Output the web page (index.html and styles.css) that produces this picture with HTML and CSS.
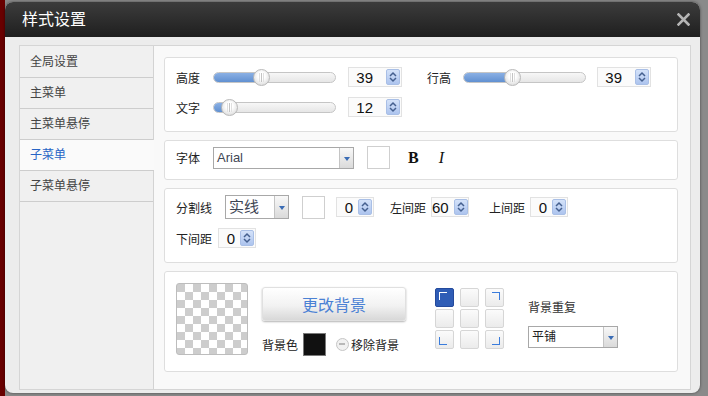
FILE: index.html
```html
<!DOCTYPE html>
<html lang="zh-CN">
<head>
    <meta charset="UTF-8">
    <title>样式设置</title>
    <link rel="stylesheet" href="styles.css">
</head>
<body>
    <div class="dialog">
        <div class="titlebar">
            <span class="title">样式设置</span>
            <svg class="close" viewBox="0 0 13 13"><path d="M1.5 1.5l10 10M11.5 1.5l-10 10" stroke="#b4b4b4" stroke-width="2.6" stroke-linecap="square"/></svg>
        </div>

        <div class="dialog-body">
            <div class="frame">
                <ul class="side-nav">
                    <li>全局设置</li>
                    <li>主菜单</li>
                    <li>主菜单悬停</li>
                    <li class="active">子菜单</li>
                    <li>子菜单悬停</li>
                </ul>

                <div class="content">
                    <!-- size -->
                    <section class="panel panel-size">
                        <div class="row">
                            <span class="label">高度</span>
                            <div class="slider"><div class="slider-fill" style="width:47px"></div><span class="slider-thumb" style="left:47px"></span></div>
                            <div class="num num-wide"><span>39</span><i class="spin"><svg viewBox="0 0 12 14"><path d="M3 6l3-3 3 3M3 8l3 3 3-3" fill="none" stroke="#45608f" stroke-width="1.5"/></svg></i></div>
                            <span class="label label-gap">行高</span>
                            <div class="slider slider-short"><div class="slider-fill" style="width:48px"></div><span class="slider-thumb" style="left:48px"></span></div>
                            <div class="num num-wide"><span>39</span><i class="spin"><svg viewBox="0 0 12 14"><path d="M3 6l3-3 3 3M3 8l3 3 3-3" fill="none" stroke="#45608f" stroke-width="1.5"/></svg></i></div>
                        </div>
                        <div class="row">
                            <span class="label">文字</span>
                            <div class="slider"><div class="slider-fill" style="width:15px"></div><span class="slider-thumb" style="left:15px"></span></div>
                            <div class="num num-wide"><span>12</span><i class="spin"><svg viewBox="0 0 12 14"><path d="M3 6l3-3 3 3M3 8l3 3 3-3" fill="none" stroke="#45608f" stroke-width="1.5"/></svg></i></div>
                        </div>
                    </section>

                    <!-- font -->
                    <section class="panel panel-font">
                        <div class="row">
                            <span class="label">字体</span>
                            <div class="select select-font"><span>Arial</span><i class="arrow"></i></div>
                            <div class="swatch"></div>
                            <span class="style-btn bold">B</span>
                            <span class="style-btn italic">I</span>
                        </div>
                    </section>

                    <!-- divider -->
                    <section class="panel panel-line">
                        <div class="row row-tall">
                            <span class="label label-line">分割线</span>
                            <div class="select select-line"><span>实线</span><i class="arrow"></i></div>
                            <div class="swatch swatch-line"></div>
                            <div class="num num-small"><span>0</span><i class="spin"><svg viewBox="0 0 12 14"><path d="M3 6l3-3 3 3M3 8l3 3 3-3" fill="none" stroke="#45608f" stroke-width="1.5"/></svg></i></div>
                            <span class="label label-gap2">左间距</span>
                            <div class="num num-small"><span>60</span><i class="spin"><svg viewBox="0 0 12 14"><path d="M3 6l3-3 3 3M3 8l3 3 3-3" fill="none" stroke="#45608f" stroke-width="1.5"/></svg></i></div>
                            <span class="label label-gap3">上间距</span>
                            <div class="num num-small"><span>0</span><i class="spin"><svg viewBox="0 0 12 14"><path d="M3 6l3-3 3 3M3 8l3 3 3-3" fill="none" stroke="#45608f" stroke-width="1.5"/></svg></i></div>
                        </div>
                        <div class="row">
                            <span class="label label-bottom">下间距</span>
                            <div class="num num-small"><span>0</span><i class="spin"><svg viewBox="0 0 12 14"><path d="M3 6l3-3 3 3M3 8l3 3 3-3" fill="none" stroke="#45608f" stroke-width="1.5"/></svg></i></div>
                        </div>
                    </section>

                    <!-- background -->
                    <section class="panel panel-bg">
                        <div class="preview"></div>
                        <div class="bg-actions">
                            <button class="change-btn">更改背景</button>
                            <div class="bg-color">
                                <span>背景色</span>
                                <div class="swatch swatch-black"></div>
                                <i class="remove-icon"></i>
                                <span class="remove-text">移除背景</span>
                            </div>
                        </div>
                        <div class="align-grid">
                            <i class="cell tl on"></i><i class="cell"></i><i class="cell tr"></i>
                            <i class="cell"></i><i class="cell"></i><i class="cell"></i>
                            <i class="cell bl"></i><i class="cell"></i><i class="cell br"></i>
                        </div>
                        <div class="repeat">
                            <div class="repeat-label">背景重复</div>
                            <div class="select select-repeat"><span>平铺</span><i class="arrow"></i></div>
                        </div>
                    </section>
                </div>
            </div>
        </div>
    </div>
</body>
</html>
```

FILE: styles.css
```css
* {
    box-sizing: border-box;
}

body {
    margin: 0;
    height: 396px;
    overflow: hidden;
    background: linear-gradient(to right, #690000 0 5px, #8a8a8a 5px);
    font-family: "Liberation Sans", "Noto Sans CJK SC", sans-serif;
    font-size: 12px;
    color: #222;
}

.dialog {
    margin: 2px 0 0 5px;
    width: 695px;
    height: 391px;
    background: #ececec;
    border-radius: 8px;
    box-shadow: 0 0 3px rgba(0, 0, 0, 0.5);
    overflow: hidden;
}

.titlebar {
    display: flex;
    align-items: center;
    justify-content: space-between;
    height: 35px;
    padding: 0 10px 4px 17px;
    background: linear-gradient(#3c3c3c, #1f1f1f);
}

.title {
    color: #fff;
    font-family: "Noto Sans CJK SC", sans-serif;
    font-size: 16px;
}

.close {
    width: 13px;
    height: 13px;
    margin-top: 4px;
}

.dialog-body {
    padding: 8px 9px 0 14px;
}

.frame {
    display: flex;
    height: 345px;
    border: 1px solid #d5d5d5;
    background: #f9f9f9;
}

.side-nav {
    list-style: none;
    margin: 0;
    padding: 1px 0 0;
    width: 134px;
    flex: none;
    background: #f0f0f0;
    border-right: 1px solid #d3d3d3;
}

.side-nav li {
    height: 31px;
    line-height: 31px;
    padding-left: 10px;
    border-bottom: 1px solid #cdcdcd;
    color: #444;
}

.side-nav li.active {
    margin-right: -1px;
    background: #fafafa;
    color: #2764c5;
}

.content {
    flex: 1;
    padding: 11px 12px 0 10px;
}

.panel {
    background: #fff;
    border: 1px solid #dedede;
    border-radius: 3px;
    margin-bottom: 8px;
    padding-left: 11px;
}

.row {
    display: flex;
    align-items: center;
    height: 20px;
}

.label {
    flex: none;
    width: 37px;
    color: #222;
}

.label-gap { margin-left: 25px; width: 36px; }
.label-line { width: 49px; }
.label-gap2 { margin-left: 16px; width: 41px; }
.label-gap3 { margin-left: 20px; width: 41px; }
.label-bottom { width: 42px; }

/* sliders */
.panel-size {
    height: 75px;
    padding-top: 9px;
}

.panel-size .row + .row {
    margin-top: 10px;
}

.slider {
    position: relative;
    flex: none;
    width: 123px;
    height: 11px;
    margin-right: 12px;
    border: 1px solid #c5c5c5;
    border-radius: 6px;
    background: linear-gradient(#f7f7f7, #e6e6e6);
}

.slider-short {
    margin-right: 11px;
}

.slider-fill {
    height: 100%;
    border-radius: 5px 0 0 5px;
    background: linear-gradient(#8ab0e4, #6190d1);
}

.slider-thumb {
    position: absolute;
    top: 50%;
    width: 17px;
    height: 17px;
    margin: -8.5px 0 0 -8.5px;
    border: 1px solid #b8b8b8;
    border-radius: 50%;
    background: radial-gradient(circle at 50% 40%, #fff 0 30%, #e4e4e4 70%, #cdcdcd);
}

.slider-thumb::before {
    content: '';
    position: absolute;
    left: 7px;
    top: 3px;
    width: 1px;
    height: 9px;
    background: #c4c4c4;
    box-shadow: -2px 0 0 #e0e0e0, 2px 0 0 #e0e0e0;
}

/* number inputs */
.num {
    display: flex;
    align-items: center;
    flex: none;
    height: 20px;
    border: 1px solid #e2e2e2;
    background: #fbfbfb;
}

.num span {
    flex: 1;
    text-align: right;
    font-family: "Liberation Sans", sans-serif;
    font-size: 15px;
    color: #111;
}

.num-wide { width: 54px; }
.num-wide span { padding-right: 13px; }
.num-small { width: 38px; }
.num-small span { padding-right: 5px; }

.spin {
    display: block;
    flex: none;
    width: 14px;
    height: 16px;
    margin-right: 1px;
    border: 1px solid #a9bfe6;
    border-radius: 2px;
    background: linear-gradient(#d4e2f9, #adc4ee);
}

.spin svg {
    display: block;
    width: 12px;
    height: 14px;
}

/* font row */
.panel-font {
    height: 40px;
    padding-top: 5px;
}

.panel-font .row {
    height: 23px;
}

.select {
    display: flex;
    flex: none;
    border: 1px solid #a8a8a8;
    background: #fff;
}

.select span {
    flex: 1;
    padding-left: 3px;
    color: #3f4654;
}

.select-font {
    width: 141px;
    height: 22px;
}

.select-font span {
    line-height: 20px;
    font-size: 13px;
    font-family: "Liberation Sans", sans-serif;
}

.arrow {
    display: flex;
    align-items: center;
    justify-content: center;
    width: 14px;
    border-left: 1px solid #c4c4c4;
    background: linear-gradient(#f8f8f8, #dadada);
}

.arrow::after {
    content: '';
    margin-top: 2px;
    border-left: 3.5px solid transparent;
    border-right: 3.5px solid transparent;
    border-top: 4px solid #3a6cb5;
}

.swatch {
    flex: none;
    width: 23px;
    height: 23px;
    margin-left: 13px;
    border: 1px solid #cfcfcf;
    background: #fff;
}

.style-btn {
    font-family: "Liberation Serif", serif;
    font-size: 16px;
    color: #111;
}

.bold {
    margin-left: 18px;
    font-weight: bold;
}

.italic {
    margin-left: 20px;
    font-style: italic;
}

/* divider */
.panel-line {
    height: 75px;
    padding-top: 6px;
}

.row-tall {
    height: 24px;
    margin-bottom: 9px;
}

.select-line {
    width: 64px;
    height: 24px;
}

.select-line span {
    line-height: 22px;
    font-size: 15px;
}

.swatch-line {
    margin-left: 13px;
    margin-right: 11px;
}

/* background */
.panel-bg {
    display: flex;
    align-items: flex-start;
    height: 101px;
    padding-top: 11px;
}

.preview {
    flex: none;
    width: 72px;
    height: 72px;
    border: 1px solid #bdbdbd;
    border-radius: 3px;
    background: conic-gradient(#fff 0 25%, #cdcdcd 0 50%, #fff 0 75%, #cdcdcd 0);
    background-size: 16px 16px;
}

.bg-actions {
    margin: 4px 0 0 14px;
}

.change-btn {
    display: block;
    width: 144px;
    height: 34px;
    padding: 0;
    border: 1px solid #e0e0e0;
    border-radius: 3px;
    background: linear-gradient(#fff, #f2f2f2 55%, #d8d8d8);
    box-shadow: 0 1px 2px rgba(0, 0, 0, 0.3);
    color: #4b81d4;
    font-family: "Noto Sans CJK SC", sans-serif;
    font-size: 16px;
}

.bg-color {
    display: flex;
    align-items: center;
    margin-top: 12px;
}

.swatch-black {
    margin-left: 5px;
    background: #111;
    border-color: #7a7a7a;
}

.remove-icon {
    position: relative;
    width: 13px;
    height: 13px;
    margin-left: 10px;
    border: 1.5px solid #c6c6c6;
    border-radius: 50%;
    background: #f1f1f1;
}

.remove-icon::after {
    content: '';
    position: absolute;
    left: 2px;
    top: 4px;
    width: 6px;
    height: 2px;
    background: #b8b8b8;
}

.remove-text {
    margin-left: 2px;
}

.align-grid {
    display: grid;
    grid-template-columns: repeat(3, 19px);
    grid-auto-rows: 19px;
    column-gap: 6px;
    row-gap: 2px;
    margin: 5px 0 0 29px;
}

.cell {
    position: relative;
    border: 1px solid #d6d6d6;
    border-radius: 2px;
    background: linear-gradient(#fbfbfb, #ebebeb);
}

.cell.on {
    border-color: #244a9c;
    background: #2f5db6;
}

.tl::before,
.tr::before,
.bl::before,
.br::before {
    content: '';
    position: absolute;
    width: 7px;
    height: 7px;
    border: 0 solid #3a7cdc;
}

.tl::before { top: 3px; left: 3px; border-top-width: 1px; border-left-width: 1px; }
.tr::before { top: 3px; right: 3px; border-top-width: 1px; border-right-width: 1px; }
.bl::before { bottom: 3px; left: 3px; border-bottom-width: 1px; border-left-width: 1px; }
.br::before { bottom: 3px; right: 3px; border-bottom-width: 1px; border-right-width: 1px; }
.cell.on::before { border-color: #fff; }

.repeat {
    margin: 17px 0 0 24px;
}

.repeat-label {
    color: #333;
    line-height: 16px;
}

.select-repeat {
    width: 90px;
    height: 22px;
    margin-top: 10px;
}

.select-repeat span {
    line-height: 20px;
    font-size: 12px;
    color: #222;
}
```
